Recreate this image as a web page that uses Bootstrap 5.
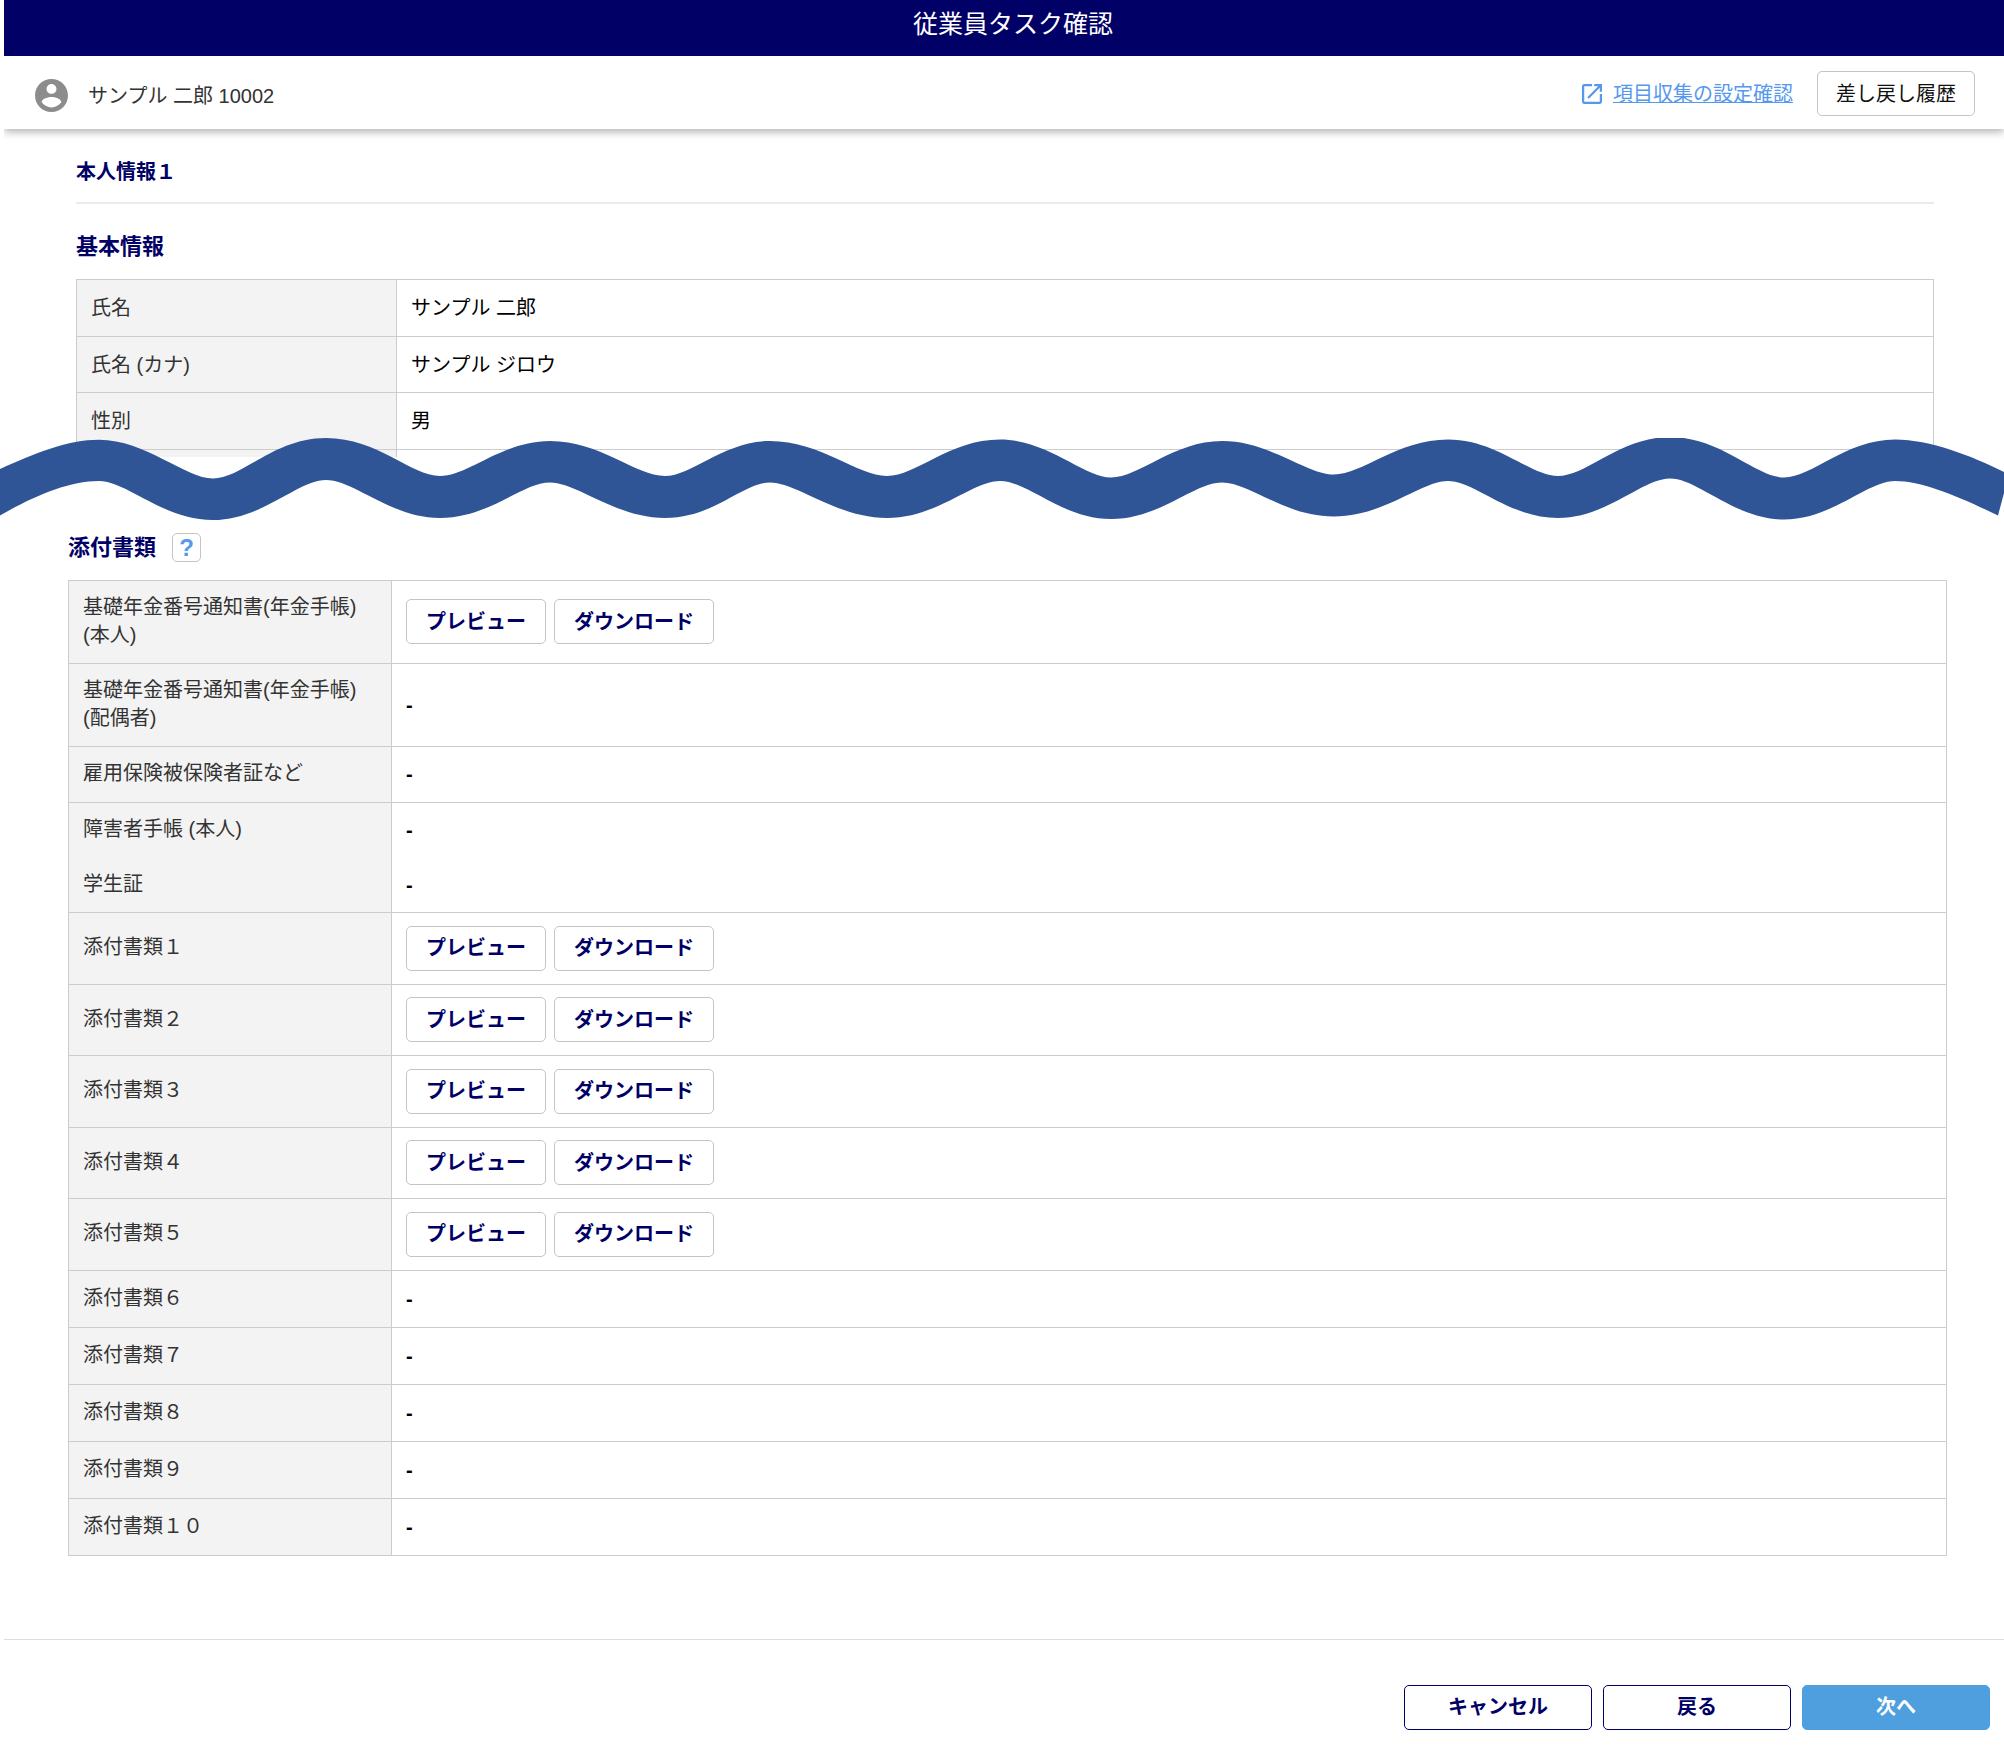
<!DOCTYPE html>
<html lang="ja">
<head>
<meta charset="utf-8">
<meta name="viewport" content="width=device-width, initial-scale=1">
<title>従業員タスク確認</title>
<link rel="stylesheet" href="https://cdn.jsdelivr.net/npm/bootstrap@5.3.0/dist/css/bootstrap.min.css">
<style>
  :root { --navy: #000066; --line: #cccccc; }
  body { font-family: "Liberation Sans", "Noto Sans CJK JP", sans-serif; font-size: 20px; line-height: 28px; color: #000; background: #fff; }
  .page-title { margin-left: 4px; height: 56px; padding: 4px 0 0 18px; background: var(--navy); font-size: 25px; line-height: 40px; font-weight: 400; }
  .user-bar { margin-left: 4px; height: 73px; padding: 2px 29px 0 31px; box-shadow: 0 3px 8px rgba(0, 0, 0, .3); clip-path: inset(0 0 -14px 0); }
  .user-name { color: #333; }
  .link-group { gap: 11px; }
  .settings-link { color: #5599ee; text-decoration-thickness: 1px; }
  .task-btn { --bs-btn-padding-x: 19px; --bs-btn-padding-y: 0; --bs-btn-font-size: 20px; --bs-btn-border-radius: 5px; --bs-btn-color: var(--navy); --bs-btn-border-color: #c4c4c4; --bs-btn-bg: #fff; --bs-btn-hover-color: var(--navy); --bs-btn-hover-border-color: var(--navy); --bs-btn-font-weight: 700; height: 45px; line-height: 42px; }
  .history-btn { --bs-btn-color: #111; --bs-btn-font-weight: 400; --bs-btn-padding-x: 18px; }
  .section-a { padding: 28px 70px 0 76px; }
  .section-b { padding: 11px 57px 0 68px; }
  .head-top { font-size: 20px; line-height: 30px; font-weight: 700; color: var(--navy); padding-bottom: 15px; margin-bottom: 27px; border-bottom: 2px solid #ebebeb; }
  .head-sub { font-size: 22px; line-height: 32px; font-weight: 700; color: var(--navy); }
  .help-btn { width: 29px; height: 29px; border: 1px solid #c4c4c4; border-radius: 5px; background: #fff; color: #5599ee; font-size: 24px; line-height: 26px; font-weight: 700; }
  .info-table { border-color: var(--line); table-layout: fixed; }
  .info-table > tbody > tr > * { padding: 0 14px; vertical-align: middle; border-color: var(--line); }
  .info-table > tbody > tr > th { font-weight: 400; background: #f3f3f3; color: #333; }
  .section-b .info-table > tbody > tr > th { padding-bottom: 2px; }
  .info-table > tbody > tr > td { color: #000; }
  .label-a { width: 320px; }
  .label-b { width: 323px; }
  .row-text { height: 57px; }
  .section-a .row-text:nth-child(even), .row-compact { height: 56px; }
  .row-double { height: 83px; }
  .row-files { height: 72px; }
  .row-files:nth-child(odd) { height: 71px; }
  .info-table > tbody > tr.row-cut > * { height: 7px; }
  .info-table > tbody > tr.row-cut, .info-table > tbody > tr.row-cut > *,
  .info-table > tbody > tr.row-joined, .info-table > tbody > tr.row-joined > * { border-bottom-style: hidden; }
  .row-joined + .row-compact { height: 54px; }
  .no-file { font-weight: 700; }
  .wave { display: block; width: 100%; height: 83px; margin-top: -19px; position: relative; }
  .page-actions { margin: 83px 0 0 4px; padding: 45px 14px 28px; border-top: 1px solid #dddddd; gap: 11px; }
  .action-btn { width: 188px; --bs-btn-border-color: var(--navy); }
  .next-btn { --bs-btn-bg: #4f9fdf; --bs-btn-border-color: #4f9fdf; --bs-btn-color: #fff; }
</style>
<script src="https://cdn.jsdelivr.net/npm/bootstrap@5.3.0/dist/js/bootstrap.bundle.min.js"></script>
</head>
<body>
<h1 class="page-title text-white text-center mb-0">従業員タスク確認</h1>

<header class="user-bar d-flex align-items-center justify-content-between bg-white">
  <div class="d-flex align-items-center gap-3 pt-1">
    <svg width="33" height="33" viewBox="2 2 20 20" fill="#8c8c8c" aria-hidden="true"><path d="M12 2C6.48 2 2 6.48 2 12s4.480 10 10 10 10-4.480 10-10S17.520 2 12 2zm0 3c1.660 0 3 1.340 3 3s-1.340 3-3 3-3-1.340-3-3 1.340-3 3-3zm0 14.200c-2.500 0-4.710-1.280-6-3.220.030-1.990 4-3.080 6-3.080 1.990 0 5.970 1.090 6 3.080-1.290 1.940-3.500 3.220-6 3.220z"/></svg>
    <span class="user-name ps-1">サンプル 二郎 10002</span>
  </div>
  <div class="d-flex align-items-center">
    <div class="link-group d-flex align-items-center me-4">
      <svg width="20" height="20" viewBox="3 3 18 18" fill="#5599ee" aria-hidden="true"><path d="M19 19H5V5h7V3H5c-1.110 0-2 .9-2 2v14c0 1.100.89 2 2 2h14c1.100 0 2-.9 2-2v-7h-2v7zM14 3v2h3.590l-9.830 9.830 1.410 1.410L19 6.410V10h2V3h-7z"/></svg>
      <a class="settings-link" href="#">項目収集の設定確認</a>
    </div>
    <button type="button" class="btn task-btn history-btn">差し戻し履歴</button>
  </div>
</header>

<main>
  <section class="section-a">
    <h2 class="head-top">本人情報１</h2>
    <h3 class="head-sub mb-3">基本情報</h3>
    <table class="table table-bordered info-table mb-0">
      <colgroup><col class="label-a"><col></colgroup>
      <tbody>
        <tr class="row-text"><th scope="row">氏名</th><td>サンプル 二郎</td></tr>
        <tr class="row-text"><th scope="row">氏名 (カナ)</th><td>サンプル ジロウ</td></tr>
        <tr class="row-text"><th scope="row">性別</th><td>男</td></tr>
        <tr class="row-cut"><th></th><td></td></tr>
      </tbody>
    </table>
  </section>

  <svg class="wave" viewBox="0 437 2004 83" preserveAspectRatio="none" fill="#2f5597" aria-hidden="true">
    <path d="M0 468C35 452 68 438.700 99 438.700C145 438.700 186 477.500 213 477.500C242 477.500 274 437 326 437C378 437 411 475 440 475C468 475 502 440 550 440C600 440 636 475 665 475C692 475 724 440 770 440C820 440 858 475 887 475C916 475 950 438.500 1000 438.500C1048 438.500 1084 476.500 1111 476.500C1139 476.500 1174 440 1222 440C1270 440 1306 473.500 1334 473.500C1362 473.500 1398 438.500 1448 438.500C1497 438.500 1530 475 1558 475C1587 475 1620 436 1670 436C1721 436 1756 476.500 1784 476.500C1812 476.500 1846 438.500 1895 438.500C1930 438.500 1972 455 2004 471V492L1998 514.500C1962 497 1923 480 1895 480C1867 480 1832 518.500 1784 518.500C1735 518.500 1698 477.500 1670 477.500C1642 477.500 1607 517 1558 517C1509 517 1475 480 1448 480C1421 480 1384 515.500 1334 515.500C1284 515.500 1250 481.500 1222 481.500C1194 481.500 1160 518 1111 518C1062 518 1028 480 1000 480C972 480 937 517 887 517C837 517 797 481.500 770 481.500C743 481.500 714 517 665 517C616 517 577 481.500 550 481.500C522 481.500 489 517 440 517C391 517 354 479 326 479C298 479 262 519 213 519C163 519 127 480 99 480C68 480 32 496 0 514.500Z"/>
  </svg>

  <section class="section-b">
    <div class="d-flex align-items-center gap-3 mb-3">
      <h3 class="head-sub mb-0">添付書類</h3>
      <button type="button" class="help-btn p-0" aria-label="ヘルプ">?</button>
    </div>
    <table class="table table-bordered info-table mb-0">
      <colgroup><col class="label-b"><col></colgroup>
      <tbody>
        <tr class="row-double"><th scope="row">基礎年金番号通知書(年金手帳)<br>(本人)</th><td><div class="d-flex gap-2"><button type="button" class="btn task-btn">プレビュー</button><button type="button" class="btn task-btn">ダウンロード</button></div></td></tr>
        <tr class="row-double"><th scope="row">基礎年金番号通知書(年金手帳)<br>(配偶者)</th><td class="no-file">-</td></tr>
        <tr class="row-compact"><th scope="row">雇用保険被保険者証など</th><td class="no-file">-</td></tr>
        <tr class="row-compact row-joined"><th scope="row">障害者手帳 (本人)</th><td class="no-file">-</td></tr>
        <tr class="row-compact"><th scope="row">学生証</th><td class="no-file">-</td></tr>
        <tr class="row-files"><th scope="row">添付書類１</th><td><div class="d-flex gap-2"><button type="button" class="btn task-btn">プレビュー</button><button type="button" class="btn task-btn">ダウンロード</button></div></td></tr>
        <tr class="row-files"><th scope="row">添付書類２</th><td><div class="d-flex gap-2"><button type="button" class="btn task-btn">プレビュー</button><button type="button" class="btn task-btn">ダウンロード</button></div></td></tr>
        <tr class="row-files"><th scope="row">添付書類３</th><td><div class="d-flex gap-2"><button type="button" class="btn task-btn">プレビュー</button><button type="button" class="btn task-btn">ダウンロード</button></div></td></tr>
        <tr class="row-files"><th scope="row">添付書類４</th><td><div class="d-flex gap-2"><button type="button" class="btn task-btn">プレビュー</button><button type="button" class="btn task-btn">ダウンロード</button></div></td></tr>
        <tr class="row-files"><th scope="row">添付書類５</th><td><div class="d-flex gap-2"><button type="button" class="btn task-btn">プレビュー</button><button type="button" class="btn task-btn">ダウンロード</button></div></td></tr>
        <tr class="row-text"><th scope="row">添付書類６</th><td class="no-file">-</td></tr>
        <tr class="row-text"><th scope="row">添付書類７</th><td class="no-file">-</td></tr>
        <tr class="row-text"><th scope="row">添付書類８</th><td class="no-file">-</td></tr>
        <tr class="row-text"><th scope="row">添付書類９</th><td class="no-file">-</td></tr>
        <tr class="row-text"><th scope="row">添付書類１０</th><td class="no-file">-</td></tr>
      </tbody>
    </table>
  </section>
</main>

<footer class="page-actions d-flex justify-content-end">
  <button type="button" class="btn task-btn action-btn">キャンセル</button>
  <button type="button" class="btn task-btn action-btn">戻る</button>
  <button type="button" class="btn task-btn action-btn next-btn">次へ</button>
</footer>
</body>
</html>
